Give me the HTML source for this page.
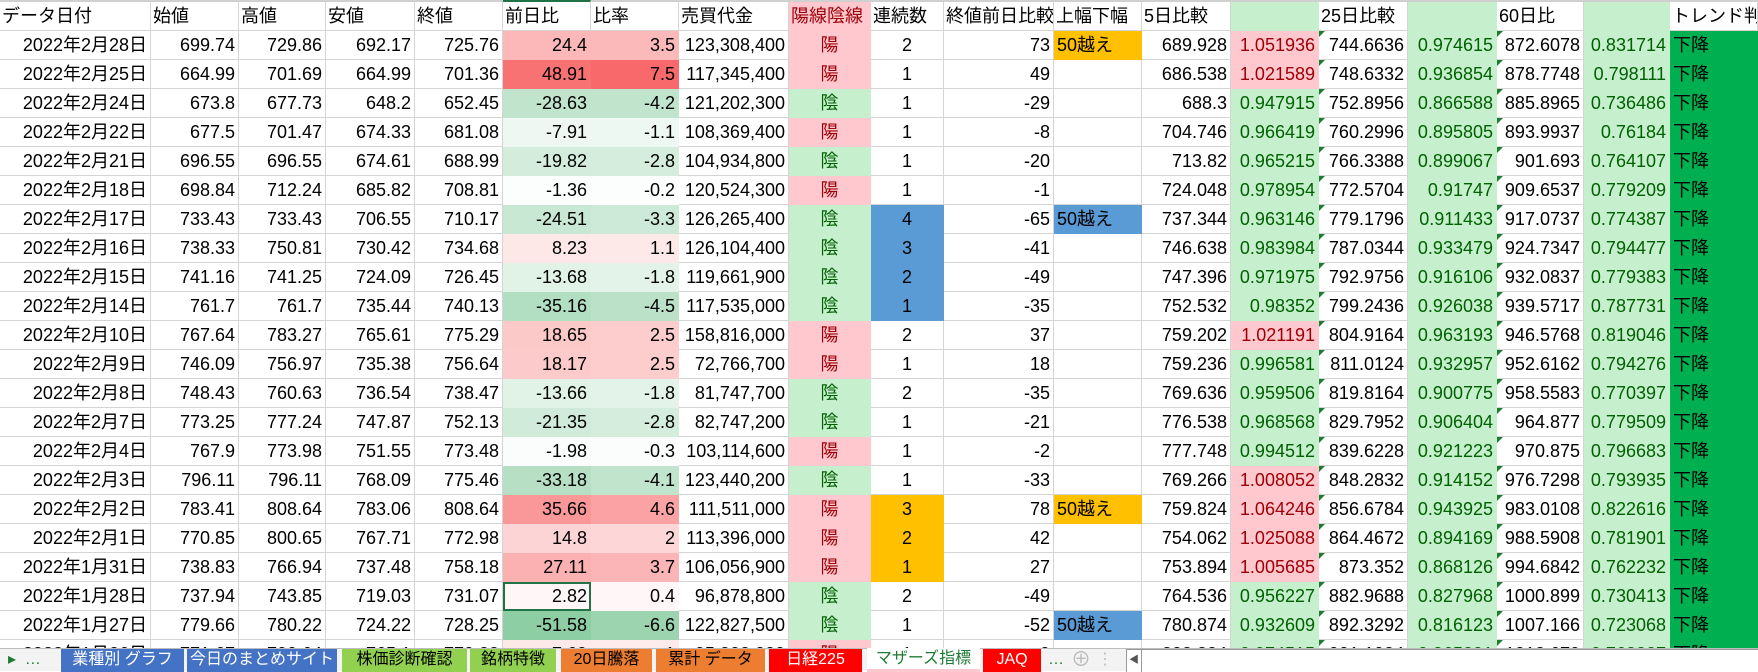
<!DOCTYPE html>
<html><head><meta charset="utf-8">
<style>
*{box-sizing:border-box;margin:0;padding:0}
body{width:1758px;height:671px;overflow:hidden;background:#fff;font-family:"Liberation Sans","Noto Sans CJK JP",sans-serif;font-size:18px;color:#000;position:relative}
.grid{position:absolute;left:0;top:0;width:1758px}
.r{display:flex;height:29px}
.r.h{height:31px;border-top:2px solid #d0d0d0}
.c{flex:none;border-right:1px solid #d4d4d4;border-bottom:1px solid #d4d4d4;text-align:right;padding:0 3px;line-height:28px;white-space:nowrap;overflow:hidden;position:relative}
.h .c{text-align:left;line-height:29px;padding-left:2px}
.L{text-align:left!important}
.C{text-align:center!important}
.yo{background:#ffc7ce;color:#9c0006;border-color:#ffc7ce}
.in{background:#c6efce;color:#006100;border-color:#c6efce}
.am{background:#ffc000;border-color:#ffc000}
.bl{background:#5b9bd5;border-color:#5b9bd5}
.tr{background:#00b050;border-color:#00b050;text-align:left}
.g{background:#c6efce;color:#006100;border-color:#c6efce}
.p{background:#ffc7ce;color:#9c0006;border-color:#ffc7ce}
.t::before{content:"";position:absolute;left:0;top:0;border-top:6px solid #1e7b34;border-right:6px solid transparent}
.tabs{position:absolute;left:0;top:648px;width:1758px;height:23px;background:#f3f3f3;border-top:1px solid #bdbdbd;font-size:16px;line-height:22px}
.tab{position:absolute;top:0;height:23px;text-align:center;white-space:nowrap;overflow:hidden}
</style></head><body>
<div class="grid" id="g">
<div class="r h">
<div class="c" style="width:151px">データ日付</div><div class="c" style="width:88px">始値</div><div class="c" style="width:87px">高値</div><div class="c" style="width:89px">安値</div><div class="c" style="width:88px">終値</div><div class="c" style="width:88px;border-top:2px solid #217346;margin-top:-2px">前日比</div><div class="c" style="width:88px">比率</div><div class="c" style="width:110px">売買代金</div><div class="c yo" style="width:82px">陽線陰線</div><div class="c" style="width:73px">連続数</div><div class="c" style="width:110px">終値前日比較</div><div class="c" style="width:88px">上幅下幅</div><div class="c" style="width:89px">5日比較</div><div class="c g" style="width:88px"></div><div class="c" style="width:89px">25日比較</div><div class="c g" style="width:89px"></div><div class="c" style="width:87px">60日比</div><div class="c g" style="width:86px"></div><div class="c" style="width:88px">トレンド判</div>
</div>
</div>
<div class="tabs">
<div class="tab" style="left:8px;width:50px;color:#1e7b34;text-align:left">&#9656;&nbsp;&nbsp;…</div>
<div class="tab" style="left:61px;width:123px;background:#4472c4;color:#fff">業種別 グラフ</div>
<div class="tab" style="left:187px;width:150px;background:#4472c4;color:#fff">今日のまとめサイト</div>
<div class="tab" style="left:342px;width:125px;background:#92d050">株価診断確認</div>
<div class="tab" style="left:470px;width:86px;background:#92d050">銘柄特徴</div>
<div class="tab" style="left:561px;width:91px;background:#ed7d31">20日騰落</div>
<div class="tab" style="left:656px;width:109px;background:#ed7d31">累計 データ</div>
<div class="tab" style="left:769px;width:93px;background:#ff0000;color:#fff">日経225</div>
<div class="tab" style="left:867px;width:113px;background:#fff;color:#1e7b34;border-bottom:3px solid #ffc7ce;top:-1px;height:24px">マザーズ指標</div>
<div class="tab" style="left:983px;width:58px;background:#ff0000;color:#fff">JAQ</div>
<div class="tab" style="left:1046px;width:20px;color:#1e7b34">…</div>
<div class="tab" style="left:1070px;width:22px;color:#bbb;font-size:20px">⊕</div>
<div class="tab" style="left:1097px;width:12px;color:#bbb">⋮</div>
<div class="tab" style="left:1126px;width:632px;background:#fff;border-left:1px solid #999;border-top:1px solid #999"><div style="width:15px;height:22px;border-right:1px solid #999;color:#555;font-size:10px">◀</div></div>
</div>
<script>
var W=[151,88,87,89,88,88,88,110,82,73,110,88,89,88,89,89,87,86,88];
var D=[
["2022年2月28日","699.74","729.86","692.17","725.76","24.4","3.5","123,308,400","陽","2","73","50越え","689.928","1.051936","744.6636","0.974615","872.6078","0.831714","am",""],
["2022年2月25日","664.99","701.69","664.99","701.36","48.91","7.5","117,345,400","陽","1","49","","686.538","1.021589","748.6332","0.936854","878.7748","0.798111","",""],
["2022年2月24日","673.8","677.73","648.2","652.45","-28.63","-4.2","121,202,300","陰","1","-29","","688.3","0.947915","752.8956","0.866588","885.8965","0.736486","",""],
["2022年2月22日","677.5","701.47","674.33","681.08","-7.91","-1.1","108,369,400","陽","1","-8","","704.746","0.966419","760.2996","0.895805","893.9937","0.76184","",""],
["2022年2月21日","696.55","696.55","674.61","688.99","-19.82","-2.8","104,934,800","陰","1","-20","","713.82","0.965215","766.3388","0.899067","901.693","0.764107","",""],
["2022年2月18日","698.84","712.24","685.82","708.81","-1.36","-0.2","120,524,300","陽","1","-1","","724.048","0.978954","772.5704","0.91747","909.6537","0.779209","",""],
["2022年2月17日","733.43","733.43","706.55","710.17","-24.51","-3.3","126,265,400","陰","4","-65","50越え","737.344","0.963146","779.1796","0.911433","917.0737","0.774387","bl","bl"],
["2022年2月16日","738.33","750.81","730.42","734.68","8.23","1.1","126,104,400","陰","3","-41","","746.638","0.983984","787.0344","0.933479","924.7347","0.794477","","bl"],
["2022年2月15日","741.16","741.25","724.09","726.45","-13.68","-1.8","119,661,900","陰","2","-49","","747.396","0.971975","792.9756","0.916106","932.0837","0.779383","","bl"],
["2022年2月14日","761.7","761.7","735.44","740.13","-35.16","-4.5","117,535,000","陰","1","-35","","752.532","0.98352","799.2436","0.926038","939.5717","0.787731","","bl"],
["2022年2月10日","767.64","783.27","765.61","775.29","18.65","2.5","158,816,000","陽","2","37","","759.202","1.021191","804.9164","0.963193","946.5768","0.819046","",""],
["2022年2月9日","746.09","756.97","735.38","756.64","18.17","2.5","72,766,700","陽","1","18","","759.236","0.996581","811.0124","0.932957","952.6162","0.794276","",""],
["2022年2月8日","748.43","760.63","736.54","738.47","-13.66","-1.8","81,747,700","陰","2","-35","","769.636","0.959506","819.8164","0.900775","958.5583","0.770397","",""],
["2022年2月7日","773.25","777.24","747.87","752.13","-21.35","-2.8","82,747,200","陰","1","-21","","776.538","0.968568","829.7952","0.906404","964.877","0.779509","",""],
["2022年2月4日","767.9","773.98","751.55","773.48","-1.98","-0.3","103,114,600","陽","1","-2","","777.748","0.994512","839.6228","0.921223","970.875","0.796683","",""],
["2022年2月3日","796.11","796.11","768.09","775.46","-33.18","-4.1","123,440,200","陰","1","-33","","769.266","1.008052","848.2832","0.914152","976.7298","0.793935","",""],
["2022年2月2日","783.41","808.64","783.06","808.64","35.66","4.6","111,511,000","陽","3","78","50越え","759.824","1.064246","856.6784","0.943925","983.0108","0.822616","am","am"],
["2022年2月1日","770.85","800.65","767.71","772.98","14.8","2","113,396,000","陽","2","42","","754.062","1.025088","864.4672","0.894169","988.5908","0.781901","","am"],
["2022年1月31日","738.83","766.94","737.48","758.18","27.11","3.7","106,056,900","陽","1","27","","753.894","1.005685","873.352","0.868126","994.6842","0.762232","","am"],
["2022年1月28日","737.94","743.85","719.03","731.07","2.82","0.4","96,878,800","陰","2","-49","","764.536","0.956227","882.9688","0.827968","1000.899","0.730413","",""],
["2022年1月27日","779.66","780.22","724.22","728.25","-51.58","-6.6","122,827,500","陰","1","-52","50越え","780.874","0.932609","892.3292","0.816123","1007.166","0.723068","bl",""],
["2022年1月26日","771.67","790.64","765.1","779.83","7.69","1","95,898,000","陽","1","-9","","808.884","0.974515","901.1984","0.865391","1012.679","0.768827","",""]
];
function mix(v,max){var t=Math.min(Math.abs(v)/max,1);var e=v>=0?[248,105,107]:[142,206,164];return "rgb("+e.map(function(x){return Math.round(255-(255-x)*t)}).join(",")+")";}
var g=document.getElementById("g"),h="";
D.forEach(function(r,i){
 h+='<div class="r">';
 for(var k=0;k<19;k++){
  var cls="c",st="width:"+W[k]+"px;",txt=r[k];
  if(k==5||k==6){var bg=mix(parseFloat(txt),k==5?51.58:7.5);st+="background:"+bg+";border-color:"+bg+";";}
  if(k==8){cls+=" C "+(txt=="陽"?"yo":"in");}
  if(k==9){cls+=" C";if(r[19])cls+=" "+r[19];}
  if(k==11){cls+=" L";if(r[18])cls+=" "+r[18];}
  if(k==13){cls+=(parseFloat(txt)>1?" p":" g");}
  if(k==14||k==16)cls+=" t";
  if(k==15||k==17)cls+=" g";
  if(k==18){cls+=" tr";txt="下降";}
  if(i==19&&k==5)st+="outline:2px solid #217346;outline-offset:-2px;";
  h+='<div class="'+cls+'" style="'+st+'">'+txt+'</div>';
 }
 h+='</div>';
});
g.insertAdjacentHTML("beforeend",h);
</script>
</body></html>
